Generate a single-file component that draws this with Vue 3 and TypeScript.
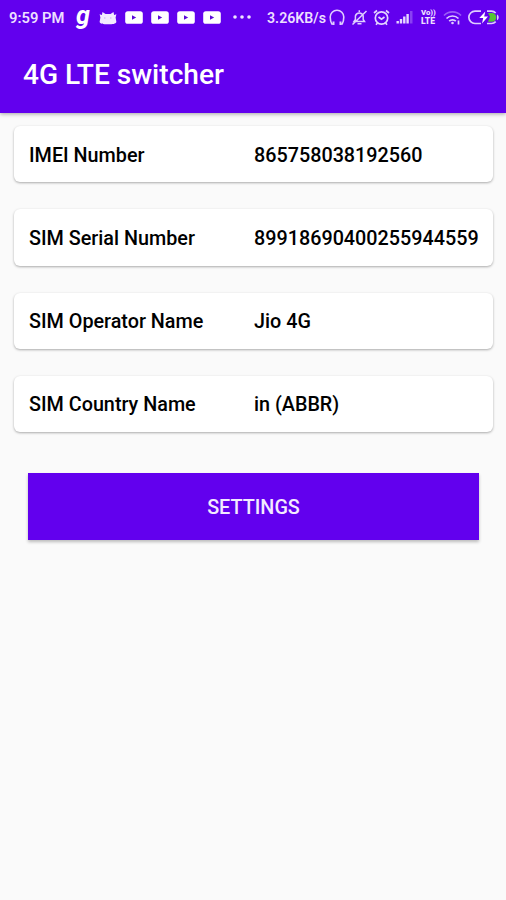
<script setup lang="ts">
interface InfoRow {
  label: string
  value: string
}

const rows: InfoRow[] = [
  { label: 'IMEI Number', value: '865758038192560' },
  { label: 'SIM Serial Number', value: '89918690400255944559' },
  { label: 'SIM Operator Name', value: 'Jio 4G' },
  { label: 'SIM Country Name', value: 'in (ABBR)' },
]
</script>

<template>
  <div class="screen">
    <header class="top">
      <div class="status">
        <div class="status-left">
          <span class="time">9:59 PM</span>
          <span class="g-icon">g</span>
          <svg class="cat" viewBox="0 0 18 14">
            <path d="M3.500 1 6.500 3h5L14.500 1l.6 3 2.300-.8-.8 3.200.8 4.500c-1 2-3.200 2.300-8.400 2.300S1.600 12.900.6 10.900l.8-4.500L.6 3.200l2.300.8z" fill="#f3eaff" />
            <path d="M5 7h1.500M11 7h1.500" stroke="#c9adf8" stroke-width="1" />
          </svg>
          <div class="videos">
            <svg v-for="n in 4" :key="n" class="video" viewBox="0 0 18 13">
              <rect x=".2" y=".2" width="17.600" height="12.600" rx="2.600" fill="#fff" />
              <path d="M7 4.200v4.600l4.200-2.300z" fill="#5b08d8" />
            </svg>
          </div>
          <svg class="dots" viewBox="0 0 18 4" fill="#efe5ff">
            <circle cx="2" cy="2" r="1.800" />
            <circle cx="9" cy="2" r="1.800" />
            <circle cx="16" cy="2" r="1.800" />
          </svg>
        </div>
        <div class="status-right">
          <span class="speed">3.26KB/s</span>
          <svg class="headphones" viewBox="0 0 16 17" fill="none" stroke="#dfceff" stroke-width="1.600">
            <path d="M4.500 15H2.800C1.500 12.500 1.200 11 1.200 8a6.800 6.800 0 0 1 13.600 0c0 3-.3 4.500-1.600 7h-1.700" />
            <path d="M4.500 12.500v3.500M11.500 12.500v3.500" stroke-width="2" />
          </svg>
          <svg class="bell" viewBox="0 0 17 17" fill="none" stroke="#dfceff" stroke-width="1.500">
            <path d="M3 12.500h10.500L12.200 10.500V7a4 4 0 0 0-7.800 0v3.500zM6.500 14.800h4M8.300 1.200V3M1.500 15.500 15.500 2" />
          </svg>
          <svg class="alarm" viewBox="0 0 17 17" fill="none" stroke="#e3d4ff" stroke-width="1.700">
            <circle cx="8.500" cy="9" r="6.200" />
            <path d="M1 4 4 1.500M16 4l-3-2.500M5.500 8l3 2.200L11.500 8M4.500 14 3 15.800M12.500 14l1.500 1.800" />
          </svg>
          <svg class="signal" viewBox="0 0 18 14" fill="#e6d8ff">
            <rect x=".5" y="11" width="2.400" height="2.500" />
            <rect x="3.800" y="9" width="2.400" height="4.500" />
            <rect x="7.100" y="6.500" width="2.400" height="7" />
            <rect x="10.400" y="4" width="2.400" height="9.500" />
            <rect x="14" y="1" width="2.500" height="12.500" opacity=".3" />
          </svg>
          <span class="volte"><span class="vo">Vo))</span><span>LTE</span></span>
          <svg class="wifi" viewBox="0 0 19 15" fill="none" stroke="#dfceff" stroke-width="1.700">
            <path d="M1 5.500a12 12 0 0 1 17 0" opacity=".45" />
            <path d="M3.500 8.500a8.400 8.400 0 0 1 12 0M6.200 11.200a4.600 4.600 0 0 1 6.600 0" />
            <circle cx="9.500" cy="13" r="1.300" fill="#dfceff" stroke="none" />
            <path d="M15.500 10.500V14.500" />
          </svg>
          <svg class="battery" viewBox="0 0 32 15">
            <path d="M13 1.200H7A6 6 0 0 0 7 13.500h6M19 1.200h4.500a6 6 0 0 1 4.200 1.800M19 13.500h4.500a6 6 0 0 0 4.200-1.800" fill="none" stroke="#dfceff" stroke-width="1.700" />
            <path d="M20 3h4a4.300 4.300 0 0 1 0 8.700h-4l2-5z" fill="#55c433" />
            <path d="M29 4.500c2.300 1 2.300 4.700 0 5.700z" fill="#dfceff" />
            <path d="m17.300 1.500-6 6.500h3.900l-1.200 5.500 6-7h-3.800z" fill="#fff" />
          </svg>
        </div>
      </div>
      <h1 class="title">4G LTE switcher</h1>
    </header>
    <main class="content">
      <section v-for="row in rows" :key="row.label" class="card">
        <span>{{ row.label }}</span>
        <span>{{ row.value }}</span>
      </section>
      <button class="settings" type="button">SETTINGS</button>
    </main>
  </div>
</template>

<style>
body {
  background: #fafafa;
}
</style>

<style scoped>
.screen {
  height: 900px;
  overflow: hidden;
  background: #fafafa;
  color: #000;
  font-family: Roboto, "Liberation Sans", sans-serif;
  font-weight: 500;
}
.top {
  height: 112.500px;
  background: #6200ee;
  color: #fff;
  box-shadow: 0 1px 4px rgba(0, 0, 0, 0.35);
}
.status {
  display: flex;
  justify-content: space-between;
  height: 35px;
  padding: 0 6px 0 9px;
  color: #ecdfff;
}
.status-left,
.status-right {
  display: flex;
  align-items: center;
}
.status svg {
  display: block;
  flex: none;
}
.time {
  width: 57px;
  font-size: 14.800px;
  font-weight: 600;
  white-space: nowrap;
}
.g-icon {
  width: 14px;
  margin: -4px 0 0 10px;
  color: #fff;
  font: italic 700 25px/32px Roboto, sans-serif;
}
.cat {
  width: 18px;
  height: 14px;
  margin-left: 9px;
}
.videos {
  display: flex;
  gap: 8px;
  margin-left: 8px;
}
.video {
  width: 18px;
  height: 13px;
}
.dots {
  width: 18px;
  height: 4px;
  margin: -2px 0 0 12px;
}
.speed {
  width: 60px;
  font-size: 14.200px;
  font-weight: 600;
  white-space: nowrap;
}
.headphones {
  width: 16px;
  height: 17px;
  margin-left: 2px;
}
.bell {
  width: 17px;
  height: 17px;
  margin-left: 6px;
}
.alarm {
  width: 17px;
  height: 17px;
  margin-left: 5px;
}
.signal {
  width: 18px;
  height: 14px;
  margin: -1px 0 0 6px;
}
.volte {
  display: flex;
  flex-direction: column;
  width: 16px;
  margin: -1px 0 0 7px;
  font-size: 8.600px;
  font-weight: 900;
  line-height: 8.500px;
}
.vo {
  font-size: 7.800px;
  line-height: 8px;
}
.wifi {
  width: 19px;
  height: 15px;
  margin-left: 6px;
}
.battery {
  width: 32px;
  height: 15px;
  margin-left: 6px;
}
.title {
  margin: 0;
  padding: 23px 0 0 23px;
  font-size: 28.100px;
  font-weight: 500;
  line-height: 33px;
}
.content {
  display: flex;
  flex-direction: column;
  gap: 27px;
  padding: 13.700px 13px 0 14px;
}
.card {
  display: grid;
  grid-template-columns: 225px 1fr;
  align-items: center;
  height: 56.200px;
  box-sizing: border-box;
  padding: 2px 0 0 15px;
  border-radius: 6px;
  background: #fff;
  box-shadow: 0 1px 2.500px rgba(0, 0, 0, 0.32);
  font-size: 19.780px;
  white-space: nowrap;
}
.settings {
  height: 67px;
  margin: 14px 14px 0;
  padding: 2px 0 0;
  border: 0;
  background: #6200ee;
  color: #f3eaff;
  font: 500 19.800px Roboto, "Liberation Sans", sans-serif;
  box-shadow: 0 2px 3px rgba(0, 0, 0, 0.25);
}
</style>
